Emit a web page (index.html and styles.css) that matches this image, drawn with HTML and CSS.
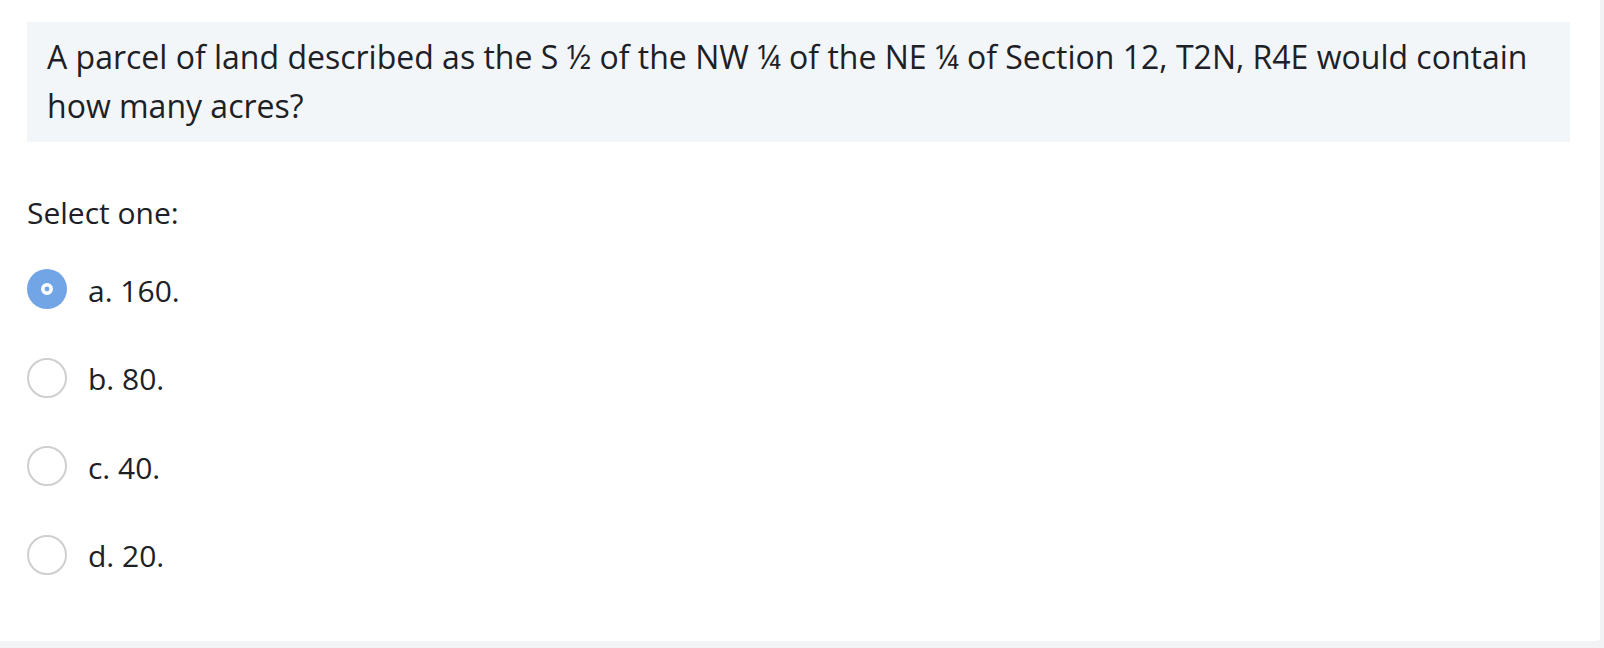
FILE: index.html
```html
<!DOCTYPE html>
<html>
<head>
<meta charset="utf-8">
<link rel="stylesheet" href="styles.css">
</head>
<body>
<div class="card">
  <div class="qtext">A parcel of land described as the S ½ of the NW ¼ of the NE ¼ of Section 12, T2N, R4E would contain how many acres?</div>
  <div class="prompt">Select one:</div>
  <div class="answers">
    <div class="opt">
      <svg class="radio" width="40" height="40" viewBox="0 0 40 40"><circle cx="20" cy="20" r="20" fill="#72a5e5"/><circle cx="20" cy="20" r="4.2" fill="#72a5e5" stroke="#fff" stroke-width="3.6"/></svg>
      <span class="label">a. 160.</span>
    </div>
    <div class="opt">
      <svg class="radio" width="40" height="40" viewBox="0 0 40 40"><circle cx="20" cy="20" r="19" fill="#fff" stroke="#cfcfcf" stroke-width="2"/></svg>
      <span class="label">b. 80.</span>
    </div>
    <div class="opt">
      <svg class="radio" width="40" height="40" viewBox="0 0 40 40"><circle cx="20" cy="20" r="19" fill="#fff" stroke="#cfcfcf" stroke-width="2"/></svg>
      <span class="label">c. 40.</span>
    </div>
    <div class="opt">
      <svg class="radio" width="40" height="40" viewBox="0 0 40 40"><circle cx="20" cy="20" r="19" fill="#fff" stroke="#cfcfcf" stroke-width="2"/></svg>
      <span class="label">d. 20.</span>
    </div>
  </div>
</div>
</body>
</html>
```

FILE: styles.css
```css
html, body {
  margin: 0;
  padding: 0;
}
body {
  background: #f2f3f5;
  width: 1604px;
  height: 648px;
  overflow: hidden;
  font-family: "Open Sans", "Noto Sans", sans-serif;
  color: #1d2125;
}
.card {
  width: 1600px;
  height: 641px;
  box-sizing: border-box;
  background: #ffffff;
  border-bottom-right-radius: 4px;
  padding: 22px 30px 0 27px;
}
.qtext {
  background: #f3f6f9;
  height: 120px;
  box-sizing: border-box;
  padding: 10px 20px 12px;
  font-size: 32px;
  line-height: 49px;
}
.prompt {
  margin-top: 51px;
  font-size: 30px;
  line-height: 40px;
}
.answers {
  display: flex;
  flex-direction: column;
  margin-top: 12px;
}
.opt {
  display: flex;
  align-items: center;
  height: 88.5px;
}
.radio {
  flex: none;
}
.label {
  margin-left: 21px;
  margin-top: 3px;
  font-size: 30px;
  line-height: 40px;
}
```
